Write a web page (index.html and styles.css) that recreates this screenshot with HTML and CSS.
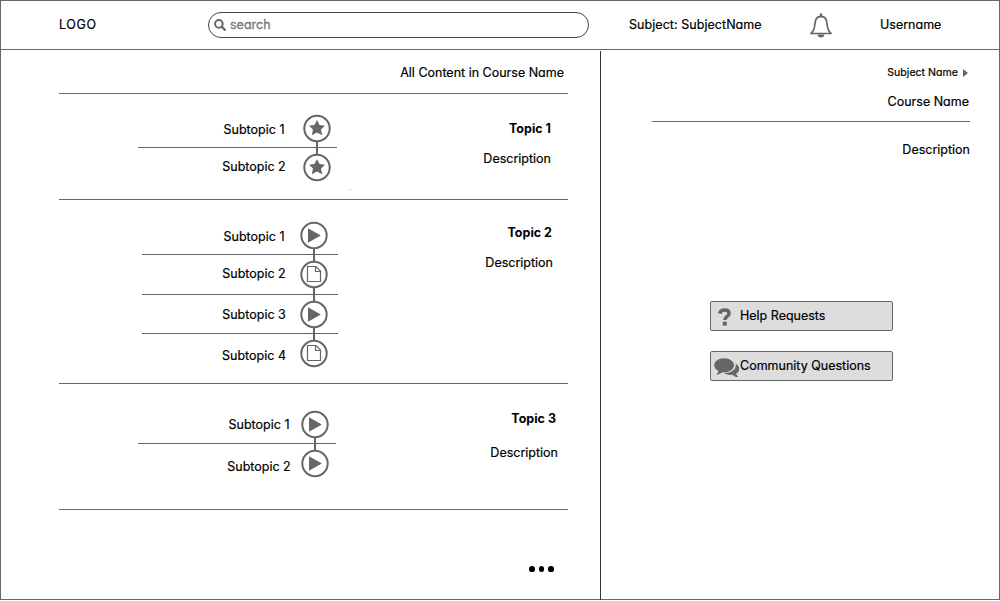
FILE: index.html
```
<!DOCTYPE html>
<html lang="en">
<head>
<meta charset="utf-8">
<title>Course content</title>
<link rel="stylesheet" href="styles.css">
</head>
<body>
<svg class="defs" aria-hidden="true">
  <symbol id="ring" viewBox="0 0 28 39"><circle cx="14" cy="19.5" r="12.700" fill="#fff" stroke="#666" stroke-width="2"/></symbol>
  <symbol id="star" viewBox="0 0 28 39"><use href="#ring" width="28" height="39"/><path d="M14 11l2.500 4.900 5.500.8-4 3.900 1.200 5.700-5.200-2.800-5.200 2.800L10 20.600l-4-3.900 5.500-.8z" fill="#666"/></symbol>
  <symbol id="play" viewBox="0 0 28 39"><use href="#ring" width="28" height="39"/><path d="M8 12.300v14.400l12.800-7.200z" fill="#666"/></symbol>
  <symbol id="page" viewBox="0 0 28 39"><use href="#ring" width="28" height="39"/><path d="M7.500 11.500h8.500l4.500 4.500v10.500h-13zM15.500 11.500v5h5" fill="none" stroke="#666" stroke-width="1.200"/></symbol>
</svg>
<div class="app">
  <header class="topbar">
    <div class="logo">LOGO</div>
    <div class="search">
      <svg class="search-icon" viewBox="0 0 12 12"><circle cx="4.900" cy="4.900" r="3.800" fill="none" stroke="#666" stroke-width="2"/><path d="M7.800 7.800l3 3" stroke="#666" stroke-width="2.300" stroke-linecap="round"/></svg>
      <span>search</span>
    </div>
    <div class="subject">Subject: SubjectName</div>
    <svg class="bell" viewBox="0 0 24 26"><path d="M12 1.500v1.800" stroke="#666" stroke-width="2.400" stroke-linecap="round"/><path d="M2 20.500c3-2.500 3.600-5 3.900-9.500C6.200 6 8 3.300 12 3.300s5.800 2.700 6.100 7.700c.3 4.500.9 7 3.900 9.500z" fill="none" stroke="#666" stroke-width="1.700" stroke-linejoin="round"/><path d="M8.700 21.500h6.600a3.300 2.900 0 0 1-6.600 0z" fill="#666"/></svg>
    <div class="user">Username</div>
  </header>
  <div class="columns">
    <main class="content">
      <div class="heading">All Content in Course Name</div>
      <section class="topic topic-1">
        <ul class="subs">
          <li class="row linked"><span class="label">Subtopic 1</span><svg class="node"><use href="#star" width="28" height="39"/></svg></li>
          <li class="row"><span class="label raised">Subtopic 2</span><svg class="node"><use href="#star" width="28" height="39"/></svg></li>
        </ul>
        <div class="info"><h2>Topic 1</h2><p>Description</p></div>
      </section>
      <section class="topic topic-2">
        <ul class="subs">
          <li class="row linked"><span class="label">Subtopic 1</span><svg class="node"><use href="#play" width="28" height="39"/></svg></li>
          <li class="row linked tall"><span class="label raised">Subtopic 2</span><svg class="node"><use href="#page" width="28" height="39"/></svg></li>
          <li class="row linked"><span class="label centered">Subtopic 3</span><svg class="node"><use href="#play" width="28" height="39"/></svg></li>
          <li class="row"><span class="label lowered">Subtopic 4</span><svg class="node"><use href="#page" width="28" height="39"/></svg></li>
        </ul>
        <div class="info"><h2>Topic 2</h2><p>Description</p></div>
      </section>
      <section class="topic topic-3">
        <ul class="subs">
          <li class="row linked"><span class="label centered">Subtopic 1</span><svg class="node"><use href="#play" width="28" height="39"/></svg></li>
          <li class="row"><span class="label lowered">Subtopic 2</span><svg class="node"><use href="#play" width="28" height="39"/></svg></li>
        </ul>
        <div class="info"><h2>Topic 3</h2><p>Description</p></div>
      </section>
      <div class="more"><i></i><i></i><i></i></div>
    </main>
    <aside class="side">
      <div class="crumb"><span>Subject Name</span><svg viewBox="0 0 5 8"><path d="M0 0v8l5-4z" fill="#666"/></svg></div>
      <div class="course">Course Name</div>
      <p class="about">Description</p>
      <div class="actions">
        <div class="action"><svg class="question" viewBox="0 0 14 18"><path d="M2.200 5.600C2.700 3.200 4.500 2 7 2c2.800 0 4.600 1.300 4.600 3.400 0 3-4.300 2.900-4.300 6.500" fill="none" stroke="#666" stroke-width="3.500"/><path d="M5.200 13.700h4.100v3.900H5.200z" fill="#666"/></svg><span>Help Requests</span></div>
        <div class="action"><svg class="chat" viewBox="0 0 24 19" preserveAspectRatio="none"><path d="M20.800 5.500c5.200 2.800 4.200 7.500.5 9.300.3 1.600 1.200 2.400 2.200 3.300-2.300.2-4.300-.7-5.600-2.200-3.300.5-6.400-.2-8.400-1.800 7.300.2 12.300-3.300 11.300-8.600z" fill="#666"/><path d="M9.700.2c5.300 0 9.500 3 9.500 6.700s-4.200 6.700-9.500 6.700c-.7 0-1.300 0-1.900-.1-1.500 1.500-3.500 2.300-5.800 2.300 1-.9 1.900-1.800 2.200-3.500C1.800 11 .2 9.100.2 6.900.2 3.200 4.400.2 9.700.2z" fill="#666"/></svg><span>Community Questions</span></div>
      </div>
    </aside>
  </div>
</div>
</body>
</html>
```
FILE: styles.css
```
* { box-sizing: border-box; }
body {
  margin: 0;
  background: #fff;
  color: #000;
  font: 12.5px/18px Inter, "Open Sans", sans-serif;
  font-feature-settings: "cv11";
  -webkit-text-stroke: 0.2px;
  white-space: nowrap;
}
h2, p, ul { margin: 0; padding: 0; font-size: inherit; }
svg { display: block; flex: none; }
.defs { display: none; }
.app {
  display: flex;
  flex-direction: column;
  width: 1000px;
  height: 600px;
  border: 1px solid #666;
}
.topbar {
  display: flex;
  flex: none;
  align-items: center;
  height: 49px;
  padding-left: 58px;
  border-bottom: 1px solid #666;
}
.logo { width: 149px; padding-bottom: 1px; letter-spacing: 0.6px; }
.search {
  display: flex;
  align-items: center;
  gap: 4px;
  width: 381px;
  height: 26px;
  padding-left: 5px;
  border: 1px solid #444;
  border-radius: 13px;
  color: #777;
}
.search span { padding-bottom: 1px; -webkit-text-stroke: 0.3px; }
.search-icon { width: 12px; height: 12px; }
.subject { width: 180px; margin-left: 40px; padding-bottom: 1px; letter-spacing: 0.05px; }
.bell { width: 24px; height: 26px; margin-top: 2px; }
.user { margin-left: 47px; padding-bottom: 1px; }
.columns { display: flex; flex: 1; }
.content { width: 599px; padding: 0 32px 0 58px; }
.heading {
  height: 44px;
  padding: 14px 4px 0 0;
  border-bottom: 1px solid #666;
  text-align: right;
}
.topic {
  display: flex;
  justify-content: space-between;
  border-bottom: 1px solid #666;
}
.topic-1 { height: 106px; padding: 15px 17px 0 79px; }
.topic-2 { height: 184px; padding: 16px 15px 0 83px; }
.topic-3 { height: 126px; padding: 21px 10px 0 79px; }
.subs { width: 199px; list-style: none; }
.topic-1 .subs::after {
  content: "";
  display: block;
  width: 4px;
  height: 1px;
  margin: 2px 0 0 210px;
  background: #e4e4e4;
}
.topic-2 .subs { width: 196px; }
.topic-3 .subs { width: 198px; }
.row { display: flex; justify-content: flex-end; height: 39px; padding-right: 6px; }
.topic-2 .row { padding-right: 10px; }
.topic-3 .row { padding-right: 7px; }
.linked { border-bottom: 1px solid #666; }
.node { width: 28px; height: 39px; }
.linked .node {
  height: 46px;
  background: linear-gradient(#666, #666) 13px 32px / 2px 14px no-repeat;
}
.tall { height: 40px; }
.label { width: 64px; margin-right: 17px; padding-top: 12px; text-align: center; }
.topic-2 .label { margin-right: 14px; }
.topic-3 .label { margin-right: 10px; }
.label.raised { padding-top: 10px; }
.label.centered { padding-top: 11px; }
.label.lowered { padding-top: 13px; }
.topic-3 .label.lowered { padding-top: 14px; }
.info { text-align: right; }
.topic-1 .info { padding-top: 11px; }
.topic-2 .info { padding-top: 8px; }
.topic-3 .info { padding-top: 5px; }
.info h2 { font-weight: 700; -webkit-text-stroke: 0; }
.info p { margin-top: 12px; }
.topic-2 .info h2 { padding-right: 1px; }
.topic-3 .info h2 { padding-right: 2px; }
.topic-3 .info p { margin-top: 16px; }
.more { display: flex; justify-content: flex-end; gap: 4px; padding: 56px 14px 0 0; }
.more i { width: 5.7px; height: 5.7px; border-radius: 50%; background: #000; }
.side { flex: 1; height: 550px; margin-top: 1px; padding: 13px 29px 0 51px; border-left: 1px solid #333; }
.crumb { display: flex; align-items: center; justify-content: flex-end; gap: 5px; height: 17px; padding-right: 2px; font-size: 10.6px; }
.crumb svg { width: 5px; height: 8px; }
.course { height: 41px; padding: 12px 1px 0 0; border-bottom: 1px solid #666; text-align: right; }
.about { padding-top: 19px; text-align: right; }
.actions { display: flex; flex-direction: column; gap: 20px; margin: 142px 0 0 58px; }
.action {
  display: flex;
  align-items: center;
  width: 183px;
  height: 30px;
  border: 1px solid #666;
  border-radius: 2px;
  background: #ddd;
}
.action span { padding-bottom: 0; }
.question { width: 15px; height: 18px; margin: 2px 8px 0 6px; }
.chat { width: 25px; height: 20px; margin: 3px 1px 0 3px; }
```
